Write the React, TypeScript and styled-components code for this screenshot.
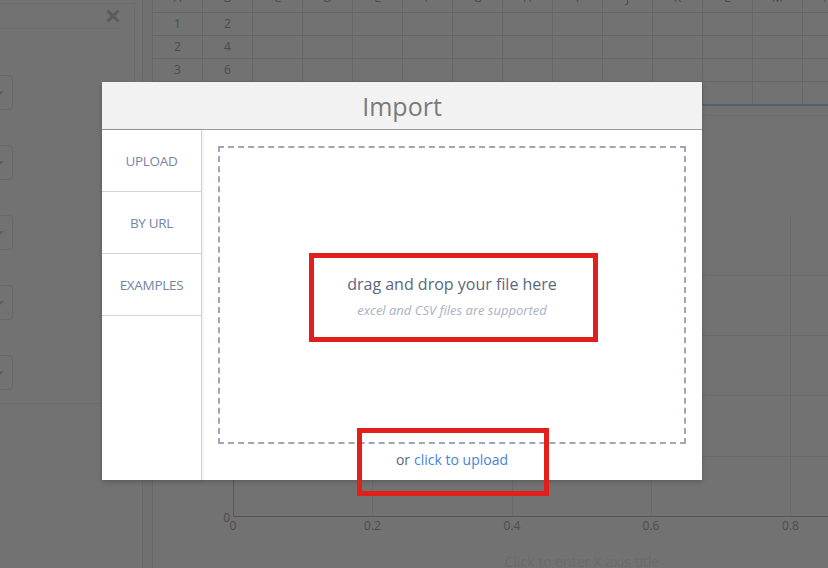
import React from "react";
import styled, { createGlobalStyle } from "styled-components";

const Global = createGlobalStyle`
  html, body { margin: 0; padding: 0; background: #727272; overflow: hidden; }
  body { font-family: "Open Sans", "DejaVu Sans", sans-serif; }
  *, *::before, *::after { box-sizing: border-box; }
`;

const Page = styled.div`
  position: relative;
  width: 828px;
  height: 568px;
  overflow: hidden;
  display: flex;
  background: #727272;
`;

/* ---------- dimmed background app ---------- */
const LeftColumn = styled.div`
  width: 142px;
  flex: none;
`;

const LeftPanel = styled.aside`
  width: 135px;
  height: 401px;
  margin-top: 3px;
  border-top: 1px solid #6b6b6b;
  border-right: 1px solid #6b6b6b;
  border-bottom: 1px solid #6b6b6b;
  display: flex;
  flex-direction: column;
`;

const PanelHead = styled.div`
  height: 25px;
  margin-right: 14px;
  border-bottom: 1px solid #6b6b6b;
  display: flex;
  align-items: center;
  justify-content: flex-end;
`;

const Controls = styled.div`
  display: flex;
  flex-direction: column;
  gap: 35px;
  padding-top: 46px;
`;

const Dropdown = styled.div`
  width: 33px;
  height: 35px;
  margin-left: -20px;
  border: 1px solid #686868;
  border-radius: 4px;
  display: flex;
  align-items: center;
  padding-left: 15px;
`;

const Caret = styled.span`
  width: 0;
  height: 0;
  border-left: 4px solid transparent;
  border-right: 4px solid transparent;
  border-top: 4px solid #5e5e5e;
`;

const Strip = styled.div`
  width: 10px;
  flex: none;
  border-left: 1px solid #6a6a6a;
  background: #707070;
`;

const Workspace = styled.main`
  flex: 1;
  min-width: 0;
  border-left: 1px solid #676767;
  display: flex;
  flex-direction: column;
`;

const Sheet = styled.div`
  margin-top: -12px;
  margin-left: -1px;
`;

const SheetRow = styled.div<{ $head?: boolean; $last?: boolean }>`
  display: grid;
  grid-template-columns: repeat(14, 50px);
  height: ${(p) => (p.$head ? 25 : p.$last ? 22 : 23)}px;
  border-bottom: ${(p) => (p.$last ? "none" : "1px solid #676767")};
`;

const Cell = styled.div<{ $head?: boolean }>`
  border-left: 1px solid #676767;
  display: flex;
  justify-content: center;
  align-items: ${(p) => (p.$head ? "flex-start" : "center")};
  padding-top: ${(p) => (p.$head ? 2 : 0)}px;
  font-size: 12px;
  line-height: 16px;
  color: #4b4b4b;
`;

const BlueBar = styled.div`
  height: 2px;
  background: #4f6073;
  margin-bottom: 9px;
`;

const ChartArea = styled.section`
  flex: 1;
  border-top: 1px solid #6b6b6b;
  overflow: hidden;
`;

const ChartSvg = styled.svg`
  display: block;
  font-family: "Open Sans", "DejaVu Sans", sans-serif;
`;

/* ---------- import dialog ---------- */
const Dialog = styled.div`
  position: absolute;
  left: 102px;
  top: 82px;
  width: 600px;
  height: 398px;
  background: #ffffff;
  box-shadow: 0 2px 5px rgba(0, 0, 0, 0.18);
  display: flex;
  flex-direction: column;
`;

const DialogHeader = styled.header`
  height: 48px;
  flex: none;
  background: #f2f2f2;
  border-bottom: 1px solid #9a9a9a;
  display: flex;
  align-items: center;
  justify-content: center;
`;

const Title = styled.h1`
  margin: 0;
  font-size: 25px;
  font-weight: 400;
  color: #7a7a7a;
  line-height: 30px;
  padding-top: 1px;
`;

const DialogBody = styled.div`
  flex: 1;
  display: flex;
  min-height: 0;
`;

const Tabs = styled.nav`
  width: 100px;
  flex: none;
  border-right: 1px solid #d2d2d2;
  box-shadow: 1px 0 3px rgba(0, 0, 0, 0.08);
  display: flex;
  flex-direction: column;
  position: relative;
  z-index: 1;
`;

const Tab = styled.div`
  height: 62px;
  border-bottom: 1px solid #d4d4d4;
  display: flex;
  align-items: center;
  justify-content: center;
  font-size: 13.5px;
  font-weight: 400;
  color: #7485a5;
  letter-spacing: -0.3px;
`;

const TabPanel = styled.div`
  flex: 1;
  padding: 16px 16px 0;
  display: flex;
  flex-direction: column;
`;

const DropZone = styled.div`
  height: 298px;
  flex: none;
  border: 2px dashed #a0a6b5;
  display: flex;
  flex-direction: column;
  align-items: center;
  justify-content: center;
  padding-top: 2px;
`;

const DropTitle = styled.div`
  font-size: 16px;
  line-height: 22px;
  color: #5b6680;
`;

const DropHint = styled.div`
  margin-top: 7px;
  font-size: 13px;
  line-height: 17px;
  font-style: italic;
  color: #a9b1c2;
`;

const UploadRow = styled.div`
  flex: 1;
  display: flex;
  align-items: center;
  justify-content: center;
  padding-bottom: 6px;
  font-size: 14px;
  color: #5b6680;
  gap: 4px;
`;

const UploadLink = styled.span`
  color: #4a82d6;
  cursor: pointer;
`;

const Highlight = styled.div<{ $x: number; $y: number; $w: number; $h: number }>`
  position: absolute;
  left: ${(p) => p.$x}px;
  top: ${(p) => p.$y}px;
  width: ${(p) => p.$w}px;
  height: ${(p) => p.$h}px;
  border: 5px solid #e31f1c;
  pointer-events: none;
`;

const columns = ["A", "B", "C", "D", "E", "F", "G", "H", "I", "J", "K", "L", "M", "N"];
const data = [
  ["1", "2"],
  ["2", "4"],
  ["3", "6"],
  [],
];

const CloseIcon = () => (
  <svg width="14" height="14" viewBox="0 0 14 14">
    <path d="M1.5 1.5 L12.5 12.5 M12.5 1.5 L1.5 12.5" stroke="#5a5a5a" strokeWidth="3" />
  </svg>
);

const Chart = () => {
  const vx = [219.5, 359.5, 498.5, 637.5];
  const hy = [159.5, 219.5, 279.5, 340.5];
  const xl = [
    { x: 80, t: "0" },
    { x: 219.5, t: "0.2" },
    { x: 359, t: "0.4" },
    { x: 498, t: "0.6" },
    { x: 637.5, t: "0.8" },
  ];
  return (
    <ChartSvg width="680" height="452" viewBox="0 0 680 452">
      {vx.map((x) => (
        <line key={x} x1={x} x2={x} y1={99} y2={400} stroke="#6a6a6a" strokeWidth="1" />
      ))}
      {hy.map((y) => (
        <line key={y} x1={80} x2={680} y1={y} y2={y} stroke="#6a6a6a" strokeWidth="1" />
      ))}
      <line x1={80.5} x2={80.5} y1={99} y2={401} stroke="#5a5a5a" strokeWidth="1" />
      <line x1={80} x2={680} y1={400.5} y2={400.5} stroke="#555555" strokeWidth="1" />
      <text x={77} y={406} textAnchor="end" fontSize="12" fill="#4d4d4d">0</text>
      {xl.map((l) => (
        <text key={l.t} x={l.x} y={414} textAnchor="middle" fontSize="12" fill="#4d4d4d">
          {l.t}
        </text>
      ))}
      <text x={429} y={451} textAnchor="middle" fontSize="14" fill="#6b6b6b">
        Click to enter X axis title
      </text>
    </ChartSvg>
  );
};

export default function App() {
  return (
    <>
      <Global />
      <Page>
        <LeftColumn>
          <LeftPanel>
            <PanelHead>
              <CloseIcon />
            </PanelHead>
            <Controls>
              {[0, 1, 2, 3, 4].map((i) => (
                <Dropdown key={i}>
                  <Caret />
                </Dropdown>
              ))}
            </Controls>
          </LeftPanel>
        </LeftColumn>
        <Strip />
        <Workspace>
          <Sheet>
            <SheetRow $head>
              {columns.map((c) => (
                <Cell key={c} $head>
                  {c}
                </Cell>
              ))}
            </SheetRow>
            {data.map((row, r) => (
              <SheetRow key={r} $last={r === data.length - 1}>
                {columns.map((c, i) => (
                  <Cell key={c}>{row[i] ?? ""}</Cell>
                ))}
              </SheetRow>
            ))}
          </Sheet>
          <BlueBar />
          <ChartArea>
            <Chart />
          </ChartArea>
        </Workspace>

        <Dialog role="dialog" aria-label="Import">
          <DialogHeader>
            <Title>Import</Title>
          </DialogHeader>
          <DialogBody>
            <Tabs>
              <Tab>UPLOAD</Tab>
              <Tab>BY URL</Tab>
              <Tab>EXAMPLES</Tab>
            </Tabs>
            <TabPanel>
              <DropZone>
                <DropTitle>drag and drop your file here</DropTitle>
                <DropHint>excel and CSV files are supported</DropHint>
              </DropZone>
              <UploadRow>
                or <UploadLink>click to upload</UploadLink>
              </UploadRow>
            </TabPanel>
          </DialogBody>
        </Dialog>

        <Highlight $x={309} $y={253} $w={289} $h={89} />
        <Highlight $x={357} $y={428} $w={192} $h={68} />
      </Page>
    </>
  );
}
